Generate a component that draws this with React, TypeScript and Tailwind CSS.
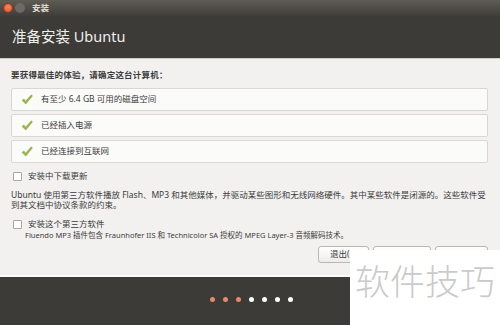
const font = { fontFamily: '"Noto Sans", "Noto Sans CJK SC", sans-serif' }

function Check() {
    return (
        <svg width="12" height="11" viewBox="0 0 12 11" className="shrink-0">
            <path
                d="M1 6.4 L2.9 5 L4.6 7.2 L10.3 0.8 L11.4 1.9 L4.8 10 Z"
                fill="#9bb84c"
                stroke="#7d9a30"
                strokeWidth="0.5"
                strokeLinejoin="round"
            />
        </svg>
    )
}

function Row({ label }: { label: string }) {
    return (
        <div className="flex h-[23px] items-center gap-[8px] rounded-[2px] border border-[#d9d7d3] bg-[#fbfbfa] pl-[9px]">
            <Check />
            <span className="text-[8.5px] text-[#3c3c3c]">{label}</span>
        </div>
    )
}

function Box() {
    return <span className="inline-block h-[9px] w-[9px] shrink-0 rounded-[1px] border border-[#a9a7a3] bg-white" />
}

export default function App() {
    return (
        <div className="relative flex h-[325px] w-[500px] flex-col overflow-hidden bg-[#3c3b37]" style={font}>
            {/* title bar */}
            <div className="flex h-[16px] items-center gap-[2px] bg-gradient-to-b from-[#5e5c53] to-[#3f3e3a] pl-[3px]">
                <span className="h-[10px] w-[10px] rounded-full border border-[#8a3a20] bg-[radial-gradient(circle_at_50%_40%,#f58a63,#dc4b1e)]" />
                <span className="h-[10px] w-[10px] rounded-full bg-[#6b6a66]" />
                <span className="ml-[5px] text-[8.5px] font-bold text-[#dfdbd2]">安装</span>
            </div>

            {/* header */}
            <div className="flex h-[42px] items-center pl-[12px]">
                <span className="text-[14.5px] text-[#eeeeec]">准备安装 Ubuntu</span>
            </div>

            {/* content */}
            <div className="flex h-[217px] flex-col border-t border-[#cfcdc9] bg-[#f2f1f0] px-[11px] pt-[10px]">
                <div className="text-[8.5px] font-bold leading-[12px] tracking-[0.2px] text-[#3c3c3c]">
                    要获得最佳的体验，请确定这台计算机：
                </div>
                <div className="mt-[7px] flex flex-col gap-[3px] pr-[1px]">
                    <Row label="有至少 6.4 GB 可用的磁盘空间" />
                    <Row label="已经插入电源" />
                    <Row label="已经连接到互联网" />
                </div>

                <div className="mt-[7px] flex items-center gap-[6px] pl-[2px] text-[8.5px] leading-[12px] text-[#3c3c3c]">
                    <Box />
                    <span>安装中下载更新</span>
                </div>

                <p className="mt-[8px] text-[8.5px] leading-[10px] text-[#3c3c3c]">
                    Ubuntu 使用第三方软件播放 Flash、MP3 和其他媒体，并驱动某些图形和无线网络硬件。其中某些软件是闭源的。这些软件受到其文档中协议条款的约束。
                </p>

                <div className="mt-[8px] flex items-center gap-[6px] pl-[2px] text-[8.5px] leading-[12px] text-[#3c3c3c]">
                    <Box />
                    <span>安装这个第三方软件</span>
                </div>
                <div className="pl-[14px] text-[7.5px] leading-[10px] text-[#3c3c3c]">
                    Fluendo MP3 插件包含 Fraunhofer IIS 和 Technicolor SA 授权的 MPEG Layer-3 音频解码技术。
                </div>

                <div className="mt-[6px] flex justify-end gap-[4px] pr-[1px]">
                    <button className="flex h-[17px] w-[51px] items-center justify-start rounded-[3px] border border-[#b9b7b3] bg-gradient-to-b from-white to-[#eeedeb] pl-[11px] text-[8.5px] text-[#3c3c3c]">
                        退出(Q)
                    </button>
                    <button className="h-[17px] w-[58px] rounded-[3px] border border-[#b9b7b3] bg-gradient-to-b from-white to-[#eeedeb]" />
                    <button className="h-[17px] w-[53px] rounded-[3px] border border-[#b9b7b3] bg-gradient-to-b from-white to-[#eeedeb]" />
                </div>
            </div>

            {/* footer */}
            <div className="flex flex-1 items-center justify-center border-t-2 border-[#fbfbfa] pb-[3px]">
                <div className="flex gap-[8px] pl-[2px]">
                    <span className="h-[5px] w-[5px] rounded-full bg-[#e4896a]" />
                    <span className="h-[5px] w-[5px] rounded-full bg-[#e4896a]" />
                    <span className="h-[5px] w-[5px] rounded-full bg-[#e4896a]" />
                    <span className="h-[5px] w-[5px] rounded-full bg-white" />
                    <span className="h-[5px] w-[5px] rounded-full bg-white" />
                    <span className="h-[5px] w-[5px] rounded-full bg-white" />
                    <span className="h-[5px] w-[5px] rounded-full bg-white" />
                </div>
            </div>

            {/* watermark */}
            <div className="absolute left-[350px] top-[250px] flex h-[75px] w-[150px] items-start justify-center bg-white pt-[10px]">
                <span className="text-[35px] leading-[40px] text-[#cacaca]" style={{ fontFamily: '"Noto Sans CJK SC", sans-serif', fontWeight: 300 }}>
                    软件技巧
                </span>
            </div>
        </div>
    )
}
